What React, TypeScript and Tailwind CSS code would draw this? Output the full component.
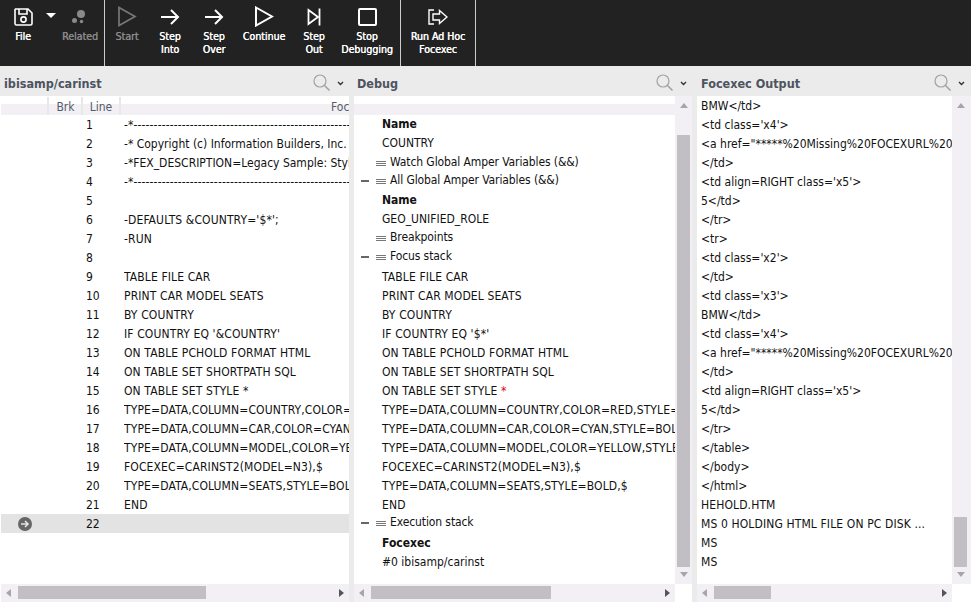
import { ReactNode } from "react";

const FONT = "font-['DejaVu_Sans_Condensed','DejaVu_Sans',sans-serif]";

// upper case code runs a touch wider than the condensed face gives
const track = (s: string) => (/[a-z]/.test(s) ? "" : "tracking-[0.12px]");

function Arrow({ dir }: { dir: "up" | "down" | "left" | "right" }) {
  const pts = {
    up: "0,5 4,0 8,5",
    down: "0,0 4,5 8,0",
    left: "5,0 5,8 0,4",
    right: "0,0 0,8 5,4",
  }[dir];
  const wide = dir === "up" || dir === "down";
  return (
    <svg width={wide ? 8 : 5} height={wide ? 5 : 8} viewBox={wide ? "0 0 8 5" : "0 0 5 8"} className="shrink-0">
      <polygon points={pts} fill={dir === "right" ? "#555" : "#a6a6a8"} />
    </svg>
  );
}

function HScroll({ left, width }: { left: number; width: number }) {
  return (
    <div className="flex h-[18px] shrink-0 items-center bg-[#f2f0f5] pr-[5px] pl-[5px] pb-[1px]">
      <Arrow dir="left" />
      <div className="relative h-[13px] flex-1">
        <div className="absolute top-0 h-[13px] bg-[#c1bfc3]" style={{ left, width }} />
      </div>
      <Arrow dir="right" />
    </div>
  );
}

function VScroll({ top, height, wide }: { top: number; height: number; wide?: boolean }) {
  return (
    <div className={`flex shrink-0 flex-col items-center bg-[#f2f0f5] py-[7px] ${wide ? "w-[19px] pr-[2px]" : "w-[17px]"}`}>
      <Arrow dir="up" />
      <div className="relative w-[13px] flex-1">
        <div className="absolute left-0 w-[13px] bg-[#c1bfc3]" style={{ top, height }} />
      </div>
      <Arrow dir="down" />
    </div>
  );
}

function TitleBar({ title, pad }: { title: string; pad: string }) {
  return (
    <div className={`flex h-[30px] shrink-0 items-center justify-between bg-[#ebebeb] pt-[4px] ${pad}`}>
      <span className="pt-[2px] text-[12.5px] font-bold text-[#4c5460]">{title}</span>
      <div className="flex items-center gap-[6px]">
        <svg width="18" height="18" viewBox="0 0 18 18" fill="none" stroke="#a2a2a2" strokeWidth="1.2">
          <circle cx="7" cy="7" r="6" />
          <line x1="11.5" y1="11.5" x2="16.5" y2="16.5" strokeWidth="1.6" />
        </svg>
        <svg width="7" height="5" viewBox="0 0 7 5" fill="none" stroke="#333" strokeWidth="1.4">
          <polyline points="1,1 3.5,3.5 6,1" />
        </svg>
      </div>
    </div>
  );
}

function ToolButton({ icon, label, width, dim }: { icon: ReactNode; label: string[]; width: string; dim?: boolean }) {
  return (
    <div className={`flex flex-col items-center pt-[5px] ${width}`}>
      <div className="flex h-[23px] items-center justify-center">{icon}</div>
      <div
        className={`mt-[2px] text-center text-[10.5px] leading-[13px] whitespace-nowrap [text-shadow:0.35px_0_0_currentColor] ${dim ? "text-[#8a8a8a]" : "text-white"}`}
      >
        {label.map((l) => (
          <div key={l}>{l}</div>
        ))}
      </div>
    </div>
  );
}

const ArrowIcon = (
  <svg width="20" height="18" viewBox="0 0 20 18" fill="none" stroke="#fff" strokeWidth="2">
    <path d="M1 9 H18 M11 2 L18 9 L11 16" />
  </svg>
);

const code = [
  "-*--------------------------------------------------------------------------",
  "-* Copyright (c) Information Builders, Inc.",
  "-*FEX_DESCRIPTION=Legacy Sample: Style sheet report",
  "-*--------------------------------------------------------------------------",
  "",
  "-DEFAULTS &COUNTRY='$*';",
  "-RUN",
  "",
  "TABLE FILE CAR",
  "PRINT CAR MODEL SEATS",
  "BY COUNTRY",
  "IF COUNTRY EQ '&COUNTRY'",
  "ON TABLE PCHOLD FORMAT HTML",
  "ON TABLE SET SHORTPATH SQL",
  "ON TABLE SET STYLE *",
  "TYPE=DATA,COLUMN=COUNTRY,COLOR=RED,STYLE=BOLD,$",
  "TYPE=DATA,COLUMN=CAR,COLOR=CYAN,STYLE=BOLD,$",
  "TYPE=DATA,COLUMN=MODEL,COLOR=YELLOW,STYLE=BOLD,$",
  "FOCEXEC=CARINST2(MODEL=N3),$",
  "TYPE=DATA,COLUMN=SEATS,STYLE=BOLD,$",
  "END",
  "",
];

const stack = [
  "TABLE FILE CAR",
  "PRINT CAR MODEL SEATS",
  "BY COUNTRY",
  "IF COUNTRY EQ '$*'",
  "ON TABLE PCHOLD FORMAT HTML",
  "ON TABLE SET SHORTPATH SQL",
];
const stack2 = [
  "TYPE=DATA,COLUMN=COUNTRY,COLOR=RED,STYLE=BOLD,$",
  "TYPE=DATA,COLUMN=CAR,COLOR=CYAN,STYLE=BOLD,$",
  "TYPE=DATA,COLUMN=MODEL,COLOR=YELLOW,STYLE=BOLD,$",
  "FOCEXEC=CARINST2(MODEL=N3),$",
  "TYPE=DATA,COLUMN=SEATS,STYLE=BOLD,$",
  "END",
];

const href = '<a href="*****%20Missing%20FOCEXURL%20Missing%20FOCEXURL';
const output = [
  "BMW</td>",
  "<td class='x4'>",
  href,
  "</td>",
  "<td align=RIGHT class='x5'>",
  "5</td>",
  "</tr>",
  "<tr>",
  "<td class='x2'>",
  "</td>",
  "<td class='x3'>",
  "BMW</td>",
  "<td class='x4'>",
  href,
  "</td>",
  "<td align=RIGHT class='x5'>",
  "5</td>",
  "</tr>",
  "</table>",
  "</body>",
  "</html>",
  "HEHOLD.HTM",
  "MS 0 HOLDING HTML FILE ON PC DISK ...",
  "MS",
  "MS",
];

function GridHeader({ children }: { children?: ReactNode }) {
  return (
    <div className="mt-px flex h-[18px] shrink-0 bg-[linear-gradient(#fff_0,#fff_7px,#f2f0f5_7px,#f2f0f5_100%)] text-[12px] text-[#555c68]">
      {children}
    </div>
  );
}

function Row({ children, className = "" }: { children: ReactNode; className?: string }) {
  return <div className={`h-[19px] overflow-hidden pl-[28px] leading-[19px] whitespace-nowrap ${className}`}>{children}</div>;
}

// tree rows sit tighter than the value rows, the gap under them differs per node
function TreeRow({ label, open, className }: { label: string; open?: boolean; className: string }) {
  return (
    <div className={`flex items-start pl-[7px] leading-[18px] whitespace-nowrap ${className}`}>
      <div className="h-[18px] w-[15px] shrink-0 pt-[9px]">{open && <div className="h-[2px] w-[8px] bg-[#666]" />}</div>
      <div className="flex h-[18px] w-[14px] shrink-0 flex-col justify-center gap-[1px] pt-[2px]">
        <div className="h-px w-[10px] bg-[#777]" />
        <div className="h-px w-[10px] bg-[#777]" />
        <div className="h-px w-[10px] bg-[#777]" />
      </div>
      <span className="tracking-[-0.1px]">{label}</span>
    </div>
  );
}

export default function App() {
  return (
    <div className={`flex h-[602px] w-[971px] flex-col overflow-hidden bg-[#ebebeb] text-[12px] text-[#111] ${FONT}`}>
      {/* Toolbar */}
      <div className="flex h-[66px] shrink-0 bg-[#222]">
        <div className="box-content flex w-[104px] shrink-0 border-r border-[#ccc]">
          <ToolButton
            width="w-[46px]"
            label={["File"]}
            icon={
              <svg width="19" height="18" viewBox="0 0 19 18" fill="none" stroke="#fff" strokeWidth="1.6">
                <path d="M1.5 1 H14 L18 5 V15.5 Q18 17 16.5 17 H2.5 Q1 17 1 15.5 V1.5 Z" />
                <path d="M5 1 V6 H13 V1" />
                <circle cx="9.5" cy="11.5" r="2.6" />
              </svg>
            }
          />
          <div className="pt-[13px]">
            <svg width="10" height="5" viewBox="0 0 10 5">
              <polygon points="0,0 10,0 5,5" fill="#fff" />
            </svg>
          </div>
          <ToolButton
            width="w-[48px]"
            dim
            label={["Related"]}
            icon={
              <svg width="18" height="18" viewBox="0 0 18 18" fill="#8a8a8a">
                <circle cx="10" cy="6" r="4" />
                <circle cx="3.5" cy="12.5" r="2.5" />
                <circle cx="10.5" cy="13.5" r="1.7" />
              </svg>
            }
          />
        </div>
        <div className="box-content flex w-[295px] shrink-0 border-r border-[#ccc]">
          <ToolButton
            width="w-[44px]"
            dim
            label={["Start"]}
            icon={
              <svg width="20" height="21" viewBox="0 0 20 21" fill="none" stroke="#777" strokeWidth="1.7">
                <polygon points="2,1.5 18,10.5 2,19.5" />
              </svg>
            }
          />
          <ToolButton width="w-[42px]" label={["Step", "Into"]} icon={ArrowIcon} />
          <ToolButton width="w-[46px]" label={["Step", "Over"]} icon={ArrowIcon} />
          <ToolButton
            width="w-[54px]"
            label={["Continue"]}
            icon={
              <svg width="20" height="21" viewBox="0 0 20 21" fill="none" stroke="#fff" strokeWidth="2">
                <polygon points="2,1.5 18,10.5 2,19.5" />
              </svg>
            }
          />
          <ToolButton
            width="w-[46px]"
            label={["Step", "Out"]}
            icon={
              <svg width="14" height="18" viewBox="0 0 14 18" fill="none" stroke="#fff" strokeWidth="1.8">
                <polygon points="1.5,2 11,9 1.5,16" />
                <line x1="12.5" y1="0.5" x2="12.5" y2="17.5" />
              </svg>
            }
          />
          <ToolButton
            width="w-[60px]"
            label={["Stop", "Debugging"]}
            icon={
              <svg width="19" height="18" viewBox="0 0 19 18" fill="none" stroke="#fff" strokeWidth="2">
                <rect x="1" y="1" width="17" height="16" rx="1" />
              </svg>
            }
          />
        </div>
        <div className="box-content flex w-[74px] shrink-0 border-r border-[#ccc]">
          <ToolButton
            width="w-[74px]"
            label={["Run Ad Hoc", "Focexec"]}
            icon={
              <svg width="20" height="16" viewBox="0 0 20 16" fill="none" stroke="#fff" strokeWidth="1.4">
                <path d="M6 1 H1 V15 H6" />
                <path d="M5 5 H11.5 V1.5 L19 8 L11.5 14.5 V11 H5 Z" />
              </svg>
            }
          />
        </div>
      </div>

      {/* Panels */}
      <div className="flex min-h-0 flex-1">
        {/* Editor */}
        <div className="flex w-[349px] shrink-0 flex-col">
          <TitleBar title="ibisamp/carinst" pad="pr-[5px] pl-[4px]" />
          <div className="flex min-h-0 flex-1 flex-col bg-white pl-px">
            <GridHeader>
              <div className="w-[48px] border-r-2 border-[#e8e8e8]" />
              <div className="w-[34px] border-r-2 border-[#e8e8e8] pt-[1px] pl-[1px] text-center">Brk</div>
              <div className="w-[38px] border-r-2 border-[#e8e8e8] pt-[1px] text-center">Line</div>
              <div className="flex-1 overflow-hidden pt-[1px] pl-[210px]">Focexec</div>
            </GridHeader>
            <div className="min-h-0 flex-1">
              {code.map((line, i) => (
                <div key={i} className={`flex h-[19px] items-center whitespace-nowrap ${i === 21 ? "bg-[#e3e3e3]" : ""}`}>
                  <div className="flex w-[85px] shrink-0 justify-start pl-[17px]">
                    {i === 21 && (
                      <svg width="14" height="14" viewBox="0 0 14 14">
                        <circle cx="7" cy="7" r="7" fill="#666" />
                        <path d="M3 7 H10 M7 4 L10 7 L7 10" fill="none" stroke="#e3e3e3" strokeWidth="1.6" />
                      </svg>
                    )}
                  </div>
                  <div className="w-[38px] shrink-0">{i + 1}</div>
                  <div className={`min-w-0 flex-1 overflow-hidden ${track(line)}`}>{line}</div>
                </div>
              ))}
            </div>
            <HScroll left={7} width={188} />
          </div>
        </div>

        {/* Debug */}
        <div className="ml-[5px] flex w-[338px] shrink-0 flex-col">
          <TitleBar title="Debug" pad="pr-[5px] pl-[3px]" />
          <div className="flex min-h-0 flex-1">
            <div className="min-w-0 flex-1 overflow-hidden bg-white">
              <GridHeader />
              <Row><b>Name</b></Row>
              <Row>COUNTRY</Row>
              <TreeRow label="Watch Global Amper Variables (&&)" className="h-[18px]" />
              <TreeRow label="All Global Amper Variables (&&)" open className="h-[20px]" />
              <Row><b>Name</b></Row>
              <Row>GEO_UNIFIED_ROLE</Row>
              <TreeRow label="Breakpoints" className="-mt-px h-[19px]" />
              <TreeRow label="Focus stack" open className="h-[21px]" />
              {stack.map((s) => (
                <Row key={s} className={track(s)}>{s}</Row>
              ))}
              <Row className="tracking-[0.12px]">
                ON TABLE SET STYLE <span className="text-[#e00000]">*</span>
              </Row>
              {stack2.map((s) => (
                <Row key={s} className={track(s)}>{s}</Row>
              ))}
              <TreeRow label="Execution stack" open className="-mt-[2px] h-[21px]" />
              <Row><b>Focexec</b></Row>
              <Row>#0 ibisamp/carinst</Row>
            </div>
            <VScroll top={27} height={432} />
          </div>
          <div className="flex shrink-0 bg-white">
            <div className="min-w-0 flex-1">
              <HScroll left={7} width={180} />
            </div>
            <div className="w-[17px] shrink-0" />
          </div>
        </div>

        {/* Output */}
        <div className="ml-[5px] flex min-w-0 flex-1 flex-col">
          <TitleBar title="Focexec Output" pad="pr-[6px] pl-[4px]" />
          <div className="flex min-h-0 flex-1">
            <div className="min-w-0 flex-1 overflow-hidden bg-white pt-px">
              {output.map((line, i) => (
                <div key={i} className={`h-[19px] pl-[4px] leading-[19px] whitespace-nowrap ${track(line)}`}>
                  {line}
                </div>
              ))}
            </div>
            <VScroll top={409} height={50} wide />
          </div>
          <div className="flex shrink-0 bg-white">
            <div className="min-w-0 flex-1">
              <HScroll left={7} width={57} />
            </div>
            <div className="w-[19px] shrink-0" />
          </div>
        </div>
      </div>
    </div>
  );
}
